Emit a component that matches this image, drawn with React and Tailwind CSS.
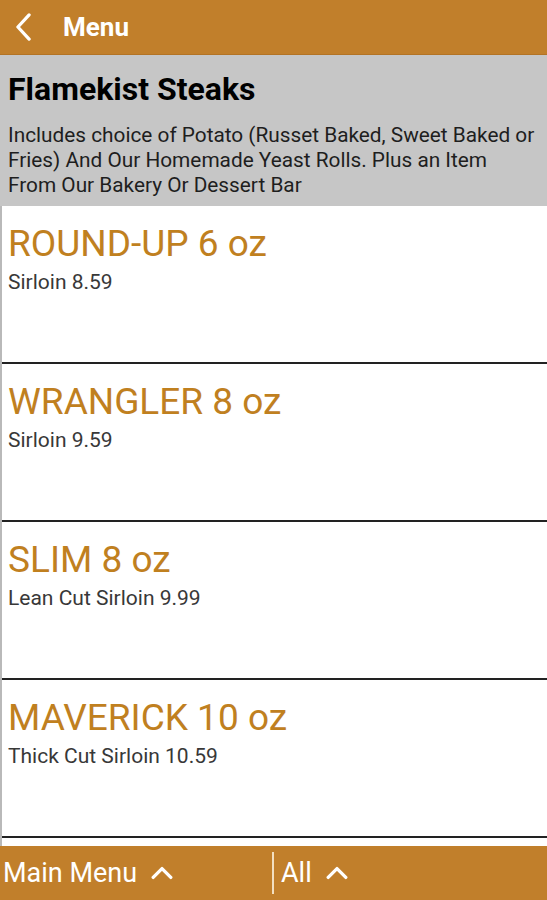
const items = [
  { name: "ROUND-UP 6 oz", desc: "Sirloin 8.59" },
  { name: "WRANGLER 8 oz", desc: "Sirloin 9.59" },
  { name: "SLIM 8 oz", desc: "Lean Cut Sirloin 9.99" },
  { name: "MAVERICK 10 oz", desc: "Thick Cut Sirloin 10.59" },
];

function Chevron({ className }) {
  return (
    <svg viewBox="0 0 20 12" className={className} fill="none" stroke="currentColor" strokeWidth="3" strokeLinecap="round" strokeLinejoin="round">
      <path d="M2 10 L10 2 L18 10" />
    </svg>
  );
}

export default function App() {
  return (
    <div className="flex h-[900px] w-[547px] flex-col overflow-hidden bg-white font-['Roboto',sans-serif]">
      {/* top bar */}
      <div className="flex h-[55px] shrink-0 items-center border-b border-[#b37324] bg-[#c17f2b] text-white">
        <svg viewBox="0 0 20 30" className="ml-[14px] h-[28px] w-[19px]" fill="none" stroke="white" strokeWidth="3.5" strokeLinecap="round" strokeLinejoin="round">
          <path d="M16 2 L4 15 L16 28" />
        </svg>
        <span className="ml-[30px] text-[26px] leading-[30px] font-bold">Menu</span>
      </div>

      {/* category header */}
      <div className="h-[151px] shrink-0 bg-[#c6c6c6] px-[8px] pt-[15px]">
        <h1 className="text-[32px] font-bold leading-[38px] text-black">Flamekist Steaks</h1>
        <p className="mt-[15px] whitespace-nowrap text-[20.8px] leading-[25px] text-[#1e1e1e]">
          Includes choice of Potato (Russet Baked, Sweet Baked or
          <br />
          Fries) And Our Homemade Yeast Rolls. Plus an Item
          <br />
          From Our Bakery Or Dessert Bar
        </p>
      </div>

      {/* items */}
      <div className="flex-1 border-l-2 border-[#b9b9b9]">
        {items.map((it) => (
          <div key={it.name} className="h-[158px] border-b-2 border-[#222] px-[6px] pt-[16px]">
            <div className="text-[37px] leading-[44px] text-[#c0801f]">{it.name}</div>
            <div className="mt-[4px] text-[21px] leading-[24px] text-[#383838]">{it.desc}</div>
          </div>
        ))}
      </div>

      {/* bottom bar */}
      <div className="flex h-[54px] shrink-0 items-center bg-[#c17f2b] text-white">
        <div className="flex w-[272px] items-center pl-[3px]">
          <span className="text-[27px] leading-[32px]">Main Menu</span>
          <Chevron className="ml-[14px] h-[14px] w-[22px]" />
        </div>
        <div className="h-[42px] w-[2px] bg-[#f3dfc0]" />
        <div className="flex items-center pl-[7px]">
          <span className="text-[27px] leading-[32px]">All</span>
          <Chevron className="ml-[14px] h-[14px] w-[22px]" />
        </div>
      </div>
    </div>
  );
}
